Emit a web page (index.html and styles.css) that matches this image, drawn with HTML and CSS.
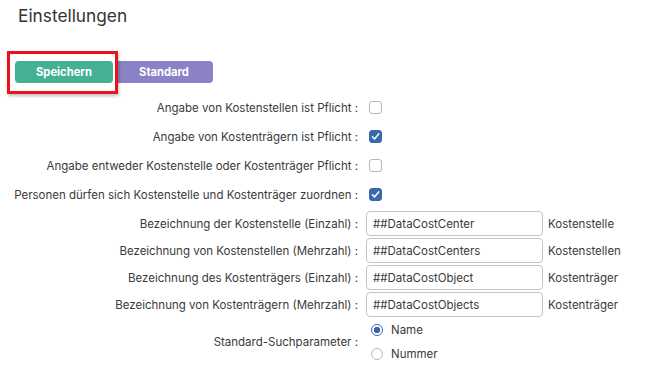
FILE: index.html
```html
<!DOCTYPE html>
<html lang="de">
<head>
    <meta charset="UTF-8">
    <meta name="viewport" content="width=device-width, initial-scale=1.0">
    <title>Einstellungen</title>
    <link rel="stylesheet" href="styles.css">
</head>
<body>
    <h1 class="title">Einstellungen</h1>

    <div class="toolbar">
        <button type="button" class="btn btn-save">Speichern</button>
        <button type="button" class="btn btn-default">Standard</button>
        <span class="highlight"></span>
    </div>

    <form class="settings">
        <div class="row check-row">
            <label for="ccRequired">Angabe von Kostenstellen ist Pflicht :</label>
            <input type="checkbox" id="ccRequired">
        </div>
        <div class="row check-row">
            <label for="coRequired">Angabe von Kostenträgern ist Pflicht :</label>
            <input type="checkbox" id="coRequired" checked>
        </div>
        <div class="row check-row">
            <label for="eitherRequired">Angabe entweder Kostenstelle oder Kostenträger Pflicht :</label>
            <input type="checkbox" id="eitherRequired">
        </div>
        <div class="row check-row">
            <label for="selfAssign">Personen dürfen sich Kostenstelle und Kostenträger zuordnen :</label>
            <input type="checkbox" id="selfAssign" checked>
        </div>

        <div class="row text-row">
            <label for="ccSingular">Bezeichnung der Kostenstelle (Einzahl) :</label>
            <input type="text" id="ccSingular" value="##DataCostCenter">
            <span class="hint">Kostenstelle</span>
        </div>
        <div class="row text-row">
            <label for="ccPlural">Bezeichnung von Kostenstellen (Mehrzahl) :</label>
            <input type="text" id="ccPlural" value="##DataCostCenters">
            <span class="hint">Kostenstellen</span>
        </div>
        <div class="row text-row">
            <label for="coSingular">Bezeichnung des Kostenträgers (Einzahl) :</label>
            <input type="text" id="coSingular" value="##DataCostObject">
            <span class="hint">Kostenträger</span>
        </div>
        <div class="row text-row">
            <label for="coPlural">Bezeichnung von Kostenträgern (Mehrzahl) :</label>
            <input type="text" id="coPlural" value="##DataCostObjects">
            <span class="hint">Kostenträger</span>
        </div>

        <div class="row radio-row">
            <label>Standard-Suchparameter :</label>
            <div class="radio-group">
                <label class="radio"><input type="radio" name="searchParam" checked> Name</label>
                <label class="radio"><input type="radio" name="searchParam"> Nummer</label>
            </div>
        </div>
    </form>
</body>
</html>
```

FILE: styles.css
```css
body {
    margin: 0;
    font-family: Inter, "Noto Sans", sans-serif;
    color: #3a3a3a;
    background-color: white;
}
.title {
    margin: 0;
    padding: 4px 0 0 18px;
    font-size: 17.3px;
    font-weight: 400;
    line-height: 24px;
    color: #333;
}
.toolbar {
    position: relative;
    display: flex;
    gap: 2px;
    margin-top: 33px;
    padding-left: 15px;
}
.btn {
    width: 98px;
    height: 22px;
    border: none;
    border-radius: 4px;
    color: white;
    font-family: inherit;
    font-size: 11.2px;
    font-weight: 700;
    cursor: pointer;
}
.btn-save {
    background-color: #44b094;
}
.btn-default {
    background-color: #8a82c5;
}
.highlight {
    position: absolute;
    left: 7px;
    top: -10px;
    width: 105px;
    height: 37px;
    border: 3px solid #e8141b;
    box-shadow: 1px 2px 3px rgba(0, 0, 0, 0.25);
    pointer-events: none;
}
.settings {
    margin-top: 10px;
}
.row {
    display: grid;
    grid-template-columns: 358px 177px auto;
    column-gap: 10px;
    align-items: center;
    font-size: 11.5px;
}
.row > label:first-child {
    text-align: right;
    white-space: nowrap;
}
.check-row {
    height: 29px;
}
.text-row {
    height: 27px;
}
.check-row + .text-row {
    margin-top: 1px;
}
input[type="checkbox"] {
    appearance: none;
    width: 13px;
    height: 13px;
    margin: 0 0 0 1px;
    border: 1px solid #b8b8b8;
    border-radius: 3px;
    background-color: white;
}
input[type="checkbox"]:checked {
    border-color: #3a68ae;
    background-color: #3a68ae;
    background-image: url("data:image/svg+xml,%3Csvg xmlns='http://www.w3.org/2000/svg' viewBox='0 0 12 12'%3E%3Cpath d='M2.6 6.3l2.3 2.3 4.6-5.4' fill='none' stroke='white' stroke-width='1.7' stroke-linecap='round' stroke-linejoin='round'/%3E%3C/svg%3E");
    background-size: 11px 11px;
    background-position: center;
    background-repeat: no-repeat;
}
input[type="text"] {
    box-sizing: border-box;
    width: 177px;
    height: 25px;
    margin: 0 0 0 -2px;
    padding: 0 6px;
    border: 1px solid #c4c4c4;
    border-radius: 4px;
    font-family: inherit;
    font-size: 11.5px;
    color: #3a3a3a;
}
.hint {
    color: #3a3a3a;
    margin-left: -7px;
}
.radio-group {
    display: flex;
    flex-direction: column;
}
.radio {
    display: flex;
    align-items: center;
    gap: 8px;
    height: 24px;
}
input[type="radio"] {
    appearance: none;
    width: 12px;
    height: 12px;
    margin: 0 0 0 3px;
    border: 1px solid #b8b8b8;
    border-radius: 50%;
    background-color: white;
}
input[type="radio"]:checked {
    border-color: #3a68ae;
    background: radial-gradient(circle, #3a68ae 0 3px, white 3.5px);
}
```
